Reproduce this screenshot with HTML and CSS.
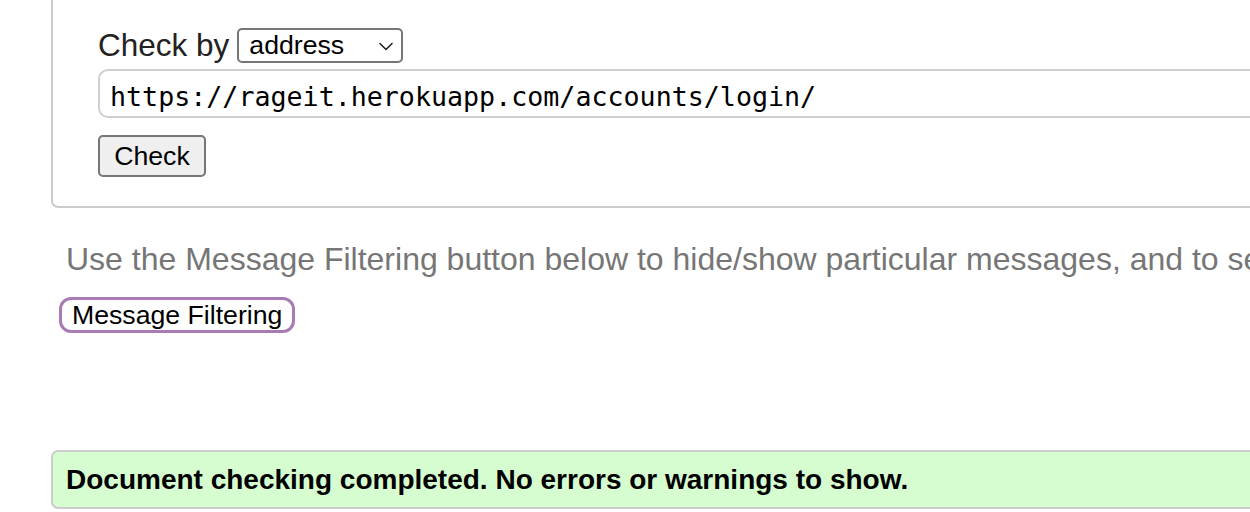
FILE: index.html
```html
<!DOCTYPE html>
<html lang="en">
<head>
<meta charset="utf-8">
<title>Validator</title>
<link rel="stylesheet" href="styles.css">
</head>
<body>
<div class="page">
  <fieldset class="checker">
    <div class="row-by">
      <label class="by-label" for="docselect">Check by</label>
      <span class="select-wrap">
        <select id="docselect" class="by-select">
          <option>address</option>
        </select>
        <svg class="chev" width="14" height="9" viewBox="0 0 14 9" aria-hidden="true"><path d="M1 1.5 L7 7.5 L13 1.5" fill="none" stroke="#222" stroke-width="1.6" stroke-linecap="round" stroke-linejoin="round"/></svg>
      </span>
    </div>
    <input class="url-input" type="text" value="https://rageit.herokuapp.com/accounts/login/">
    <div class="row-btn">
      <button class="check-btn" type="button">Check</button>
    </div>
  </fieldset>

  <p class="hint">Use the Message Filtering button below to hide/show particular messages, and to see total counts of errors and warnings.</p>
  <button class="filter-btn" type="button">Message Filtering</button>

  <div class="success">Document checking completed. No errors or warnings to show.</div>
</div>
</body>
</html>
```
FILE: styles.css
```css
html, body {
  margin: 0;
  padding: 0;
  overflow: hidden;
  background: #fff;
}

body {
  font-family: "Liberation Sans", Arial, sans-serif;
  font-size: 28px;
  color: #222;
}

.page {
  width: 1600px;
  padding-left: 51px;
  overflow: hidden;
}

.checker {
  margin: 0;
  border: 2px solid #cccccc;
  border-top: 0;
  border-radius: 0 0 7px 7px;
  padding: 27px 0 29px 45px;
  min-width: 0;
}

.row-by {
  display: flex;
  align-items: center;
  height: 36px;
}

.by-label {
  font-size: 31.5px;
  color: #222;
  margin-right: 8px;
}

.select-wrap {
  position: relative;
  display: inline-block;
}

.by-select {
  appearance: none;
  -webkit-appearance: none;
  width: 166px;
  height: 35px;
  border: 2px solid #767676;
  border-radius: 5px;
  background: #fff;
  color: #000;
  font-family: "Liberation Sans", Arial, sans-serif;
  font-size: 26.67px;
  padding: 0 0 0 10px;
  margin: 0;
}

.chev {
  position: absolute;
  right: 10px;
  top: 14px;
  pointer-events: none;
}

.url-input {
  display: block;
  box-sizing: border-box;
  width: 1300px;
  height: 49px;
  margin: 6px 0 0 0;
  border: 2px solid #cfcfcf;
  border-radius: 10px;
  padding: 5px 10px 0 10px;
  font-family: "DejaVu Sans Mono", "Liberation Mono", monospace;
  font-size: 26.67px;
  color: #000;
  background: #fff;
}

.row-btn {
  margin-top: 17px;
}

.check-btn {
  box-sizing: border-box;
  width: 108px;
  height: 42px;
  background: #efefef;
  border: 2px solid #767676;
  border-radius: 5px;
  font-family: "Liberation Sans", Arial, sans-serif;
  font-size: 26.67px;
  color: #000;
  padding: 0 12px;
  margin: 0;
}

.hint {
  margin: 33px 0 0 15px;
  color: #767676;
  font-size: 32px;
  white-space: nowrap;
  line-height: 36px;
}

.filter-btn {
  display: block;
  box-sizing: border-box;
  margin: 20px 0 0 8px;
  height: 36px;
  padding: 0 10px;
  background: #fff;
  border: 3.5px solid #a87bb4;
  border-radius: 12px;
  font-family: "Liberation Sans", Arial, sans-serif;
  font-size: 26.67px;
  line-height: 28px;
  color: #000;
}

.success {
  margin-top: 117px;
  box-sizing: border-box;
  height: 59px;
  border: 2px solid #cccccc;
  border-radius: 7px;
  background: #d6fdd0;
  padding: 0 0 0 13px;
  display: flex;
  align-items: center;
  font-weight: bold;
  font-size: 28px;
  color: #000;
}
```
